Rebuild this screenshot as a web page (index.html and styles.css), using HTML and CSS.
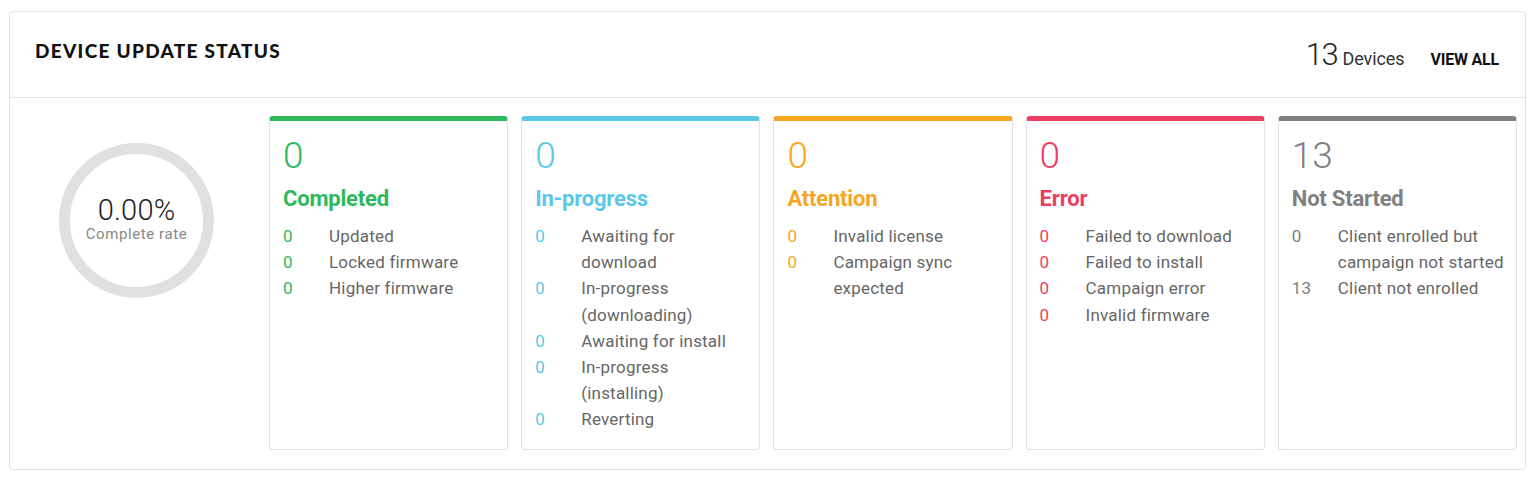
FILE: index.html
```html
<!DOCTYPE html>
<html>
<head>
<meta charset="utf-8">
<link rel="stylesheet" href="styles.css">
</head>
<body>
<div class="panel">
  <div class="panel-head">
    <h2 class="title">DEVICE UPDATE STATUS</h2>
    <div class="head-right">
      <span class="count"><span class="count-num">13</span> Devices</span>
      <a class="view-all">VIEW ALL</a>
    </div>
  </div>
  <div class="panel-body">
    <div class="gauge-col">
      <div class="gauge">
        <div class="gauge-value">0.00%</div>
        <div class="gauge-label">Complete rate</div>
      </div>
    </div>
    <div class="cards">
      <div class="card green">
        <div class="big">0</div>
        <div class="name">Completed</div>
        <ul class="rows">
          <li><span class="n">0</span><span class="l">Updated</span></li>
          <li><span class="n">0</span><span class="l">Locked firmware</span></li>
          <li><span class="n">0</span><span class="l">Higher firmware</span></li>
        </ul>
      </div>
      <div class="card blue">
        <div class="big">0</div>
        <div class="name">In-progress</div>
        <ul class="rows">
          <li><span class="n">0</span><span class="l">Awaiting for download</span></li>
          <li><span class="n">0</span><span class="l">In-progress (downloading)</span></li>
          <li><span class="n">0</span><span class="l">Awaiting for install</span></li>
          <li><span class="n">0</span><span class="l">In-progress (installing)</span></li>
          <li><span class="n">0</span><span class="l">Reverting</span></li>
        </ul>
      </div>
      <div class="card orange">
        <div class="big">0</div>
        <div class="name">Attention</div>
        <ul class="rows">
          <li><span class="n">0</span><span class="l">Invalid license</span></li>
          <li><span class="n">0</span><span class="l">Campaign sync expected</span></li>
        </ul>
      </div>
      <div class="card red">
        <div class="big">0</div>
        <div class="name">Error</div>
        <ul class="rows">
          <li><span class="n">0</span><span class="l">Failed to download</span></li>
          <li><span class="n">0</span><span class="l">Failed to install</span></li>
          <li><span class="n">0</span><span class="l">Campaign error</span></li>
          <li><span class="n">0</span><span class="l">Invalid firmware</span></li>
        </ul>
      </div>
      <div class="card grey">
        <div class="big">13</div>
        <div class="name">Not Started</div>
        <ul class="rows">
          <li><span class="n">0</span><span class="l">Client enrolled but campaign not started</span></li>
          <li><span class="n">13</span><span class="l">Client not enrolled</span></li>
        </ul>
      </div>
    </div>
  </div>
</div>
</body>
</html>
```

FILE: styles.css
```css
* { box-sizing: border-box; }
html, body { margin: 0; padding: 0; background: #fff; }
body {
  font-family: Roboto, "Noto Sans", sans-serif;
  color: #333;
  padding: 11px 10px 0 9px;
}
.panel {
  border: 1px solid #e2e2e2;
  border-radius: 4px;
  width: 1517px;
  background: #fff;
}
.panel-head {
  height: 86px;
  border-bottom: 1px solid #e2e2e2;
  display: flex;
  justify-content: space-between;
  align-items: flex-start;
  padding: 0 26px 0 25px;
}
.title {
  margin: 27px 0 0 0;
  font-family: Lato, sans-serif;
  font-weight: 900;
  font-size: 19px;
  letter-spacing: 1.3px;
  color: #111;
  line-height: 24px;
}
.head-right {
  display: flex;
  align-items: baseline;
  margin-top: 24px;
}
.count {
  font-size: 18px;
  color: #333;
  letter-spacing: -0.1px;
}
.count-num {
  font-size: 31px;
  font-weight: 300;
  color: #222;
  letter-spacing: -1.5px;
  margin-right: 1px;
}
.view-all {
  margin-left: 26px;
  font-size: 16px;
  font-weight: 700;
  color: #111;
  letter-spacing: -0.2px;
}
.panel-body {
  display: flex;
  padding: 18px 8px 19px 0;
}
.gauge-col {
  width: 259px;
  flex: none;
  padding: 27px 0 0 49px;
}
.gauge {
  width: 155px;
  height: 155px;
  border-radius: 50%;
  border: 11px solid #e0e0e0;
  display: flex;
  flex-direction: column;
  align-items: center;
  justify-content: center;
  padding-bottom: 4px;
}
.gauge-value {
  font-size: 29px;
  font-weight: 300;
  color: #222;
  line-height: 30px;
  letter-spacing: 0.2px;
}
.gauge-label {
  font-size: 15px;
  color: #888;
  line-height: 18px;
  letter-spacing: 0.6px;
}
.cards {
  flex: 1;
  display: flex;
  gap: 13px;
}
.card {
  flex: 1;
  border: 1px solid #e2e2e2;
  border-top: 5px solid;
  border-radius: 4px;
  padding: 15px 11px 16px 13px;
}
.big {
  font-size: 37px;
  font-weight: 300;
  line-height: 40px;
}
.name {
  font-size: 22px;
  font-weight: 700;
  letter-spacing: -0.2px;
  line-height: 28px;
  margin-top: 9px;
}
.rows {
  list-style: none;
  margin: 10px 0 0 0;
  padding: 0;
}
.rows li {
  display: flex;
  font-size: 17px;
  line-height: 26.2px;
  letter-spacing: 0.2px;
}
.rows .n { width: 46px; flex: none; }
.rows .l { color: #666; }
.green { border-top-color: #2fb75c; }
.green .big, .green .name, .green .n { color: #2fb75c; }
.blue { border-top-color: #5bc8ea; }
.blue .big, .blue .name, .blue .n { color: #5bc8ea; }
.orange { border-top-color: #f5a623; }
.orange .big, .orange .name, .orange .n { color: #f5a623; }
.red { border-top-color: #ea3f62; }
.red .big, .red .name, .red .n { color: #ea3f62; }
.grey { border-top-color: #808080; }
.grey .big, .grey .name, .grey .n { color: #808080; }
```
